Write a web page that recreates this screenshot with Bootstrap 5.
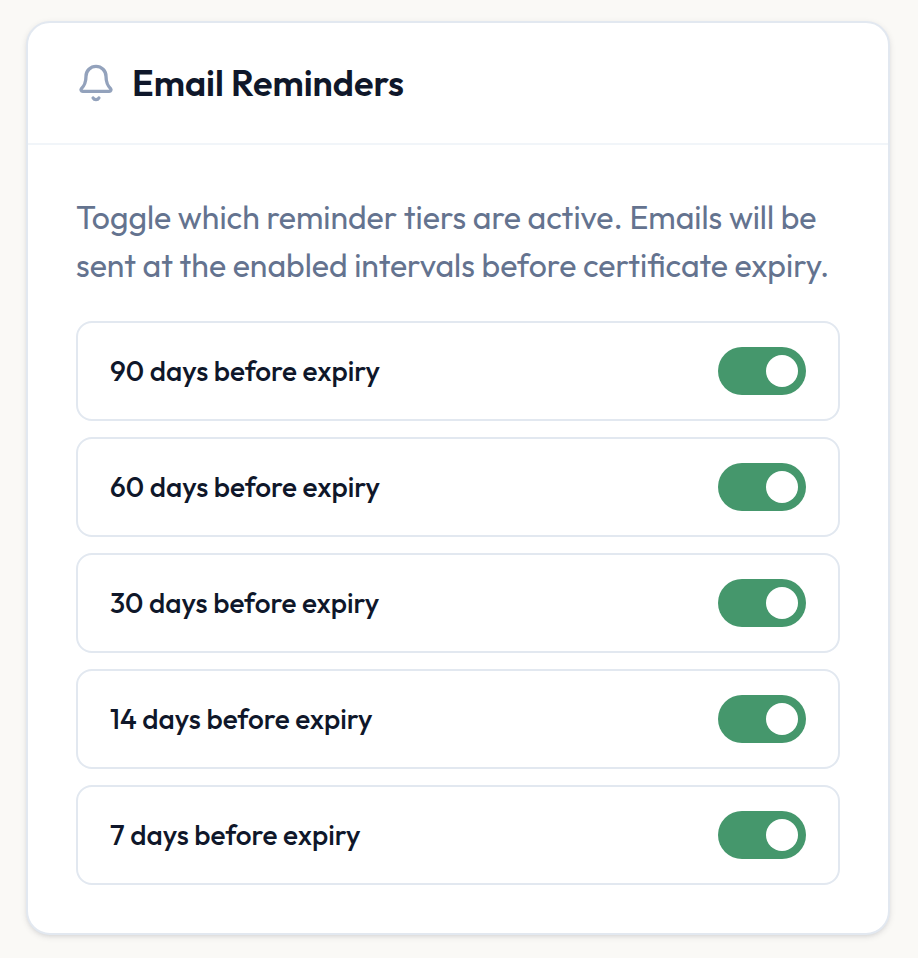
<!DOCTYPE html>
<html lang="en">
<head>
<meta charset="utf-8">
<meta name="viewport" content="width=device-width, initial-scale=1">
<title>Email Reminders</title>
<link href="https://cdn.jsdelivr.net/npm/bootstrap@5.3.0/dist/css/bootstrap.min.css" rel="stylesheet">
<style>
body { background: #faf9f6; color: #0f172a; font-family: Outfit, Lato, sans-serif; padding: 21px 28px 22px 26px; }
.panel { border: 2px solid #e2e8f0; border-radius: 24px; box-shadow: 0 2px 6px rgba(15, 23, 42, .1), 0 2px 4px -2px rgba(15, 23, 42, .1); color: inherit; }
.panel-head { padding: 36px 48px; border-bottom: 2px solid #f1f5f9; gap: 16px; background: none; }
.panel-body { padding: 48px; }
.panel-title { font-size: 36px; line-height: 48px; font-weight: 600; }
.intro { font-size: 32px; line-height: 48px; color: #64738f; margin-bottom: 32px; }
.tiers { gap: 16px; }
.tier { border: 2px solid #e2e8f0; border-radius: 16px; padding: 24px 32px; cursor: pointer; }
.tier-name { font-size: 28px; line-height: 48px; font-weight: 500; }
.form-switch .form-check-input.tier-switch { display: flex; float: none; margin: 0; padding: 8px; width: 88px; height: 48px; border: 0; cursor: pointer; background: #cbd5e1; }
.form-switch .form-check-input.tier-switch::before { content: ""; width: 32px; height: 32px; border-radius: 50%; background: #fff; }
.form-switch .form-check-input.tier-switch:checked { background: #45976c; justify-content: flex-end; }
</style>
</head>
<body>
<main class="card panel">
  <header class="card-header panel-head d-flex align-items-center">
    <svg width="40" height="40" viewBox="0 0 24 24" fill="none" stroke="#93a2bc" stroke-width="2" stroke-linecap="round" stroke-linejoin="round" aria-hidden="true"><path d="M10.268 21a2 2 0 0 0 3.464 0"/><path d="M3.262 15.326A1 1 0 0 0 4 17h16a1 1 0 0 0 .74-1.673C19.41 13.956 18 12.499 18 8A6 6 0 0 0 6 8c0 4.499-1.411 5.956-2.738 7.326"/></svg>
    <h1 class="panel-title mb-0">Email Reminders</h1>
  </header>
  <div class="card-body panel-body">
    <p class="intro">Toggle which reminder tiers are active. Emails will be sent at the enabled intervals before certificate expiry.</p>
    <div class="tiers d-flex flex-column">
      <label class="tier d-flex justify-content-between align-items-center" for="t90"><span class="tier-name">90 days before expiry</span><span class="form-switch p-0 m-0 d-flex"><input class="form-check-input tier-switch" type="checkbox" role="switch" id="t90" checked></span></label>
      <label class="tier d-flex justify-content-between align-items-center" for="t60"><span class="tier-name">60 days before expiry</span><span class="form-switch p-0 m-0 d-flex"><input class="form-check-input tier-switch" type="checkbox" role="switch" id="t60" checked></span></label>
      <label class="tier d-flex justify-content-between align-items-center" for="t30"><span class="tier-name">30 days before expiry</span><span class="form-switch p-0 m-0 d-flex"><input class="form-check-input tier-switch" type="checkbox" role="switch" id="t30" checked></span></label>
      <label class="tier d-flex justify-content-between align-items-center" for="t14"><span class="tier-name">14 days before expiry</span><span class="form-switch p-0 m-0 d-flex"><input class="form-check-input tier-switch" type="checkbox" role="switch" id="t14" checked></span></label>
      <label class="tier d-flex justify-content-between align-items-center" for="t7"><span class="tier-name">7 days before expiry</span><span class="form-switch p-0 m-0 d-flex"><input class="form-check-input tier-switch" type="checkbox" role="switch" id="t7" checked></span></label>
    </div>
  </div>
</main>
<script src="https://cdn.jsdelivr.net/npm/bootstrap@5.3.0/dist/js/bootstrap.bundle.min.js"></script>
</body>
</html>
